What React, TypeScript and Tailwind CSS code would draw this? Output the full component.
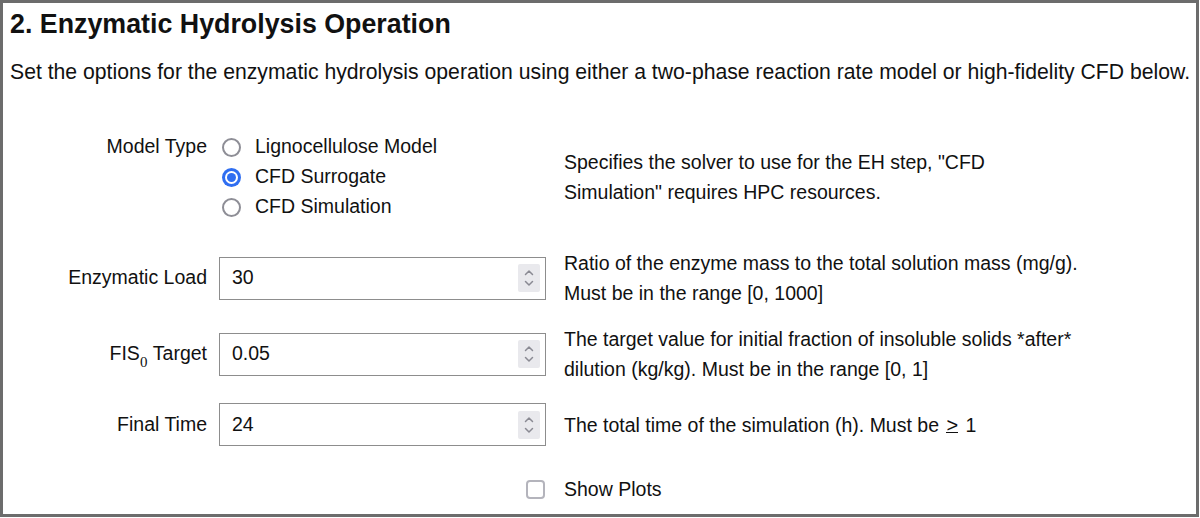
import React from 'react';

const font = { fontFamily: '"Liberation Sans", Arial, Helvetica, sans-serif' };

const Radio = ({ checked, label }: { checked?: boolean; label: string }) => (
  <label className="flex items-center h-[30px]">
    {checked ? (
      <span className="w-[19px] h-[19px] rounded-full bg-[#2f6ef1] flex items-center justify-center">
        <span className="w-[13px] h-[13px] rounded-full bg-white flex items-center justify-center">
          <span className="w-[9px] h-[9px] rounded-full bg-[#2f6ef1]"></span>
        </span>
      </span>
    ) : (
      <span className="w-[19px] h-[19px] rounded-full border-2 border-[#8e8e96] bg-white"></span>
    )}
    <span className="ml-[14px]">{label}</span>
  </label>
);

const Spinner = () => (
  <span className="w-[22px] h-[28px] shrink-0 bg-[#e9e9ed] rounded-[2px] flex items-center justify-center">
    <svg width="12" height="24" viewBox="0 0 12 24" fill="none" stroke="#8a8a93" strokeWidth="1.5" strokeLinecap="round" strokeLinejoin="round">
      <path d="M2.5 8.5 L6 5 L9.5 8.5" />
      <path d="M2.5 15.5 L6 19 L9.5 15.5" />
    </svg>
  </span>
);

const NumberField = ({ value }: { value: string }) => (
  <div className="w-[327px] h-[43px] border border-[#8d8d8d] bg-white flex items-center justify-between pl-3 pr-[5px]">
    <span>{value}</span>
    <Spinner />
  </div>
);

const Row = ({ label, children, help, className = '' }: { label: React.ReactNode; children: React.ReactNode; help?: React.ReactNode; className?: string }) => (
  <div className={`grid grid-cols-[204px_339px_1fr] items-center ${className}`}>
    <div className="text-right whitespace-nowrap">{label}</div>
    <div className="pl-[12px]">{children}</div>
    <div className="ml-[18px] leading-[30px] max-w-[520px]">{help}</div>
  </div>
);

export default function App() {
  return (
    <div style={font} className="w-[1199px] h-[517px] border-[3px] border-[#6c6c6c] bg-white text-[#111] text-[19.5px] overflow-hidden">
      <h2 className="mt-[6px] ml-[7px] text-[26.8px] leading-[30px] font-bold">2. Enzymatic Hydrolysis Operation</h2>
      <p className="mt-[18px] ml-[7px] text-[21.2px] leading-[30px] whitespace-nowrap">
        Set the options for the enzymatic hydrolysis operation using either a two-phase reaction rate model or high-fidelity CFD below.
      </p>

      <div className="flex flex-col">
        <Row
          className="mt-[45px]"
          label={<span className="relative -top-[30px]">Model Type</span>}
          help={<>Specifies the solver to use for the EH step, "CFD Simulation" requires HPC resources.</>}
        >
          <div className="flex flex-col pl-[3px]">
            <Radio label="Lignocellulose Model" />
            <Radio checked label="CFD Surrogate" />
            <Radio label="CFD Simulation" />
          </div>
        </Row>

        <Row
          className="mt-[26px]"
          label="Enzymatic Load"
          help={<>Ratio of the enzyme mass to the total solution mass (mg/g).<br />Must be in the range [0, 1000]</>}
        >
          <NumberField value="30" />
        </Row>

        <Row
          className="mt-[16px]"
          label={
            <span>
              FIS<sub className="text-[15px] align-[-3px]" style={{ fontFamily: '"Liberation Serif", serif' }}>0</sub>&nbsp;Target
            </span>
          }
          help={<>The target value for initial fraction of insoluble solids *after* dilution (kg/kg). Must be in the range [0, 1]</>}
        >
          <NumberField value="0.05" />
        </Row>

        <Row
          className="mt-[19px]"
          label="Final Time"
          help={
            <>
              The total time of the simulation (h). Must be <span className="inline-block mx-[2px] border-b-[1.5px] border-[#111] leading-[14px] text-[20px]">&gt;</span> 1
            </>
          }
        >
          <NumberField value="24" />
        </Row>

        <Row className="mt-[28px]" label="" help={<span>Show Plots</span>}>
          <div className="flex justify-end pr-[1px]">
            <span className="w-[19px] h-[19px] rounded-[4px] border-2 border-[#b4b4bc] bg-white"></span>
          </div>
        </Row>
      </div>
    </div>
  );
}
